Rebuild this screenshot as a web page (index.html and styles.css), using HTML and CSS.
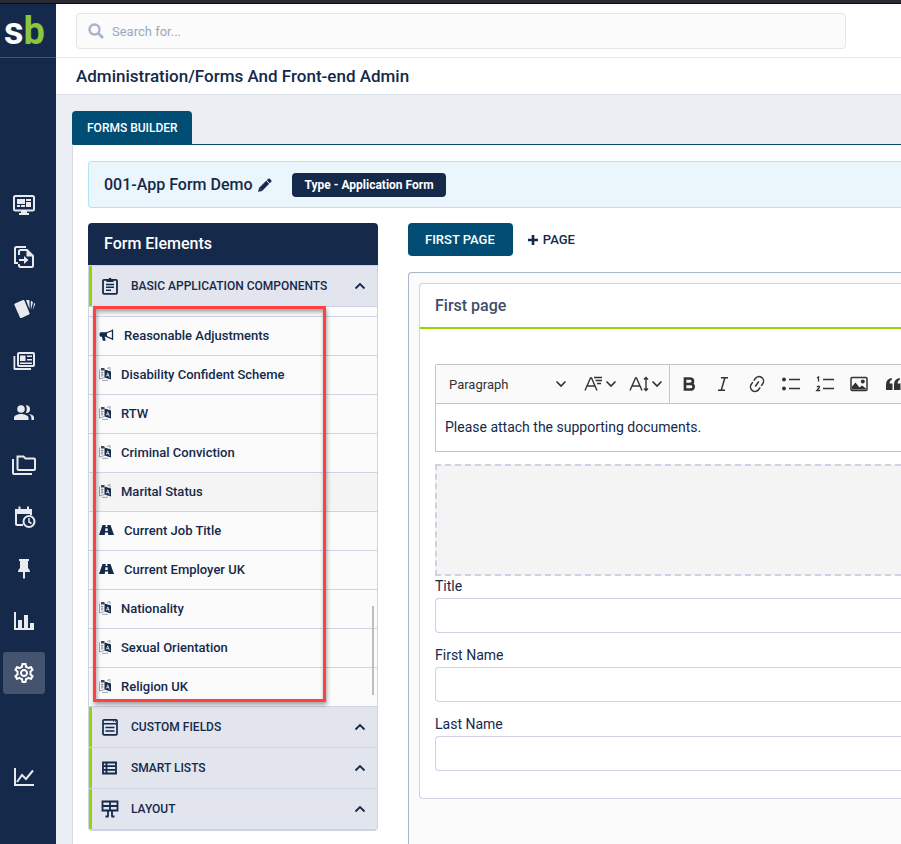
FILE: index.html
```
<!DOCTYPE html>
<html lang="en">
<head>
    <meta charset="UTF-8">
    <meta name="viewport" content="width=device-width, initial-scale=1.0">
    <title>Forms Builder</title>
    <link rel="stylesheet" href="styles.css">
</head>
<body>
    <!-- Shared icons -->
    <svg class="sprite" aria-hidden="true">
        <symbol id="chevron-up" viewBox="0 0 12 12"><path d="M1.500 8.500 6 4l4.500 4.500" fill="none" stroke="currentColor" stroke-width="1.800"/></symbol>
        <symbol id="chevron-down" viewBox="0 0 12 12"><path d="M2 4l4 4 4-4" fill="none" stroke="currentColor" stroke-width="1.700" stroke-linecap="round"/></symbol>
        <symbol id="translate" viewBox="0 0 12 14">
            <path d="M.5 2.500V12l5-1.500" fill="none" stroke="currentColor" stroke-width=".7" opacity=".6"/>
            <path d="M2 1h3.500v2.500H2z" fill="currentColor" opacity=".85"/>
            <path d="M8 1.500l3-1v3" fill="none" stroke="currentColor" stroke-width=".7" opacity=".6"/>
            <path d="M2 5.500h2.500M2 8h2.500M3 4.500V10" stroke="currentColor" stroke-width=".7" opacity=".6"/>
            <path d="M5.500 2.500 12 4.500v8L5.500 10.500z" fill="currentColor"/>
            <path d="M7.300 9.500 8.800 5.800l1.600 4.700M7.900 8.500h2" fill="none" stroke="#fff" stroke-width=".7"/>
            <path d="M3 13.300h6" fill="none" stroke="currentColor" stroke-width=".7" opacity=".6"/>
        </symbol>
        <symbol id="bullhorn" viewBox="0 0 14 14">
            <path d="M13 1.500v10.500M12.800 2.500 6.500 5M12.800 11 6.500 8.300" fill="none" stroke="currentColor" stroke-width="1.300"/>
            <path d="M1 4.200h6.500v4.600H5.200l1 4H3.400l-1-4H1q-1-.5-1-2.300t1-2.300z" fill="currentColor"/>
        </symbol>
        <symbol id="road" viewBox="0 0 15 12">
            <path d="M3.500 1H6.700L6.500 3h2l-.2-2h3.200L15 11H9.200L9 8.500H6L5.800 11H0zM6.400 4.300 6.200 7h2.600l-.2-2.700z" fill="currentColor" fill-rule="evenodd"/>
        </symbol>
    </svg>

    <div class="window-edge"></div>
    <div class="app">
        <nav class="sidebar">
            <a href="#" class="logo"><span>s</span><span class="logo-green">b</span></a>
            <div class="nav-items">
                <a href="#" class="nav-item" aria-label="Dashboard"><svg viewBox="0 0 24 24"><rect x="2" y="3" width="20" height="14.500" rx="1.500" fill="none" stroke="currentColor" stroke-width="2"/><path d="M9 18h6v2h2v2H7v-2h2zM5 6h8v5H5zM14 6h5v2h-5zM14 9h5v5h-5zM5 12h3v2H5zM9 12h4v2H9z" fill="currentColor"/></svg></a>
                <a href="#" class="nav-item" aria-label="Documents"><svg viewBox="0 0 24 24"><path d="M14 2H4.500Q3 2 3 3.500V18h3" fill="none" stroke="currentColor" stroke-width="2"/><path d="M7 10V6.500Q7 5 8.500 5H15l6 6v9.500q0 1.500-1.500 1.500H8.500Q7 22 7 20.500V19" fill="none" stroke="currentColor" stroke-width="2"/><path d="M14.500 5v6.500H21zM7 14h5v-3l4.500 4L12 19v-3H7z" fill="currentColor"/></svg></a>
                <a href="#" class="nav-item" aria-label="Cards"><svg viewBox="0 0 24 24"><path d="M3 6.500 11 3q1-.4 1.500.7L17.500 16q.4 1-.6 1.500L9.500 21q-1 .4-1.500-.6L2.400 8q-.4-1 .6-1.500z" fill="currentColor"/><path d="M14 3h2.500q1 0 1 1v8zM18.800 3.800l1.400.7q1 .5.600 1.500L18.800 13zM22 6l1.300.7-2.300 6.300" fill="currentColor"/></svg></a>
                <a href="#" class="nav-item" aria-label="News"><svg viewBox="0 0 24 24"><rect x="6" y="4" width="16" height="13" rx="1" fill="none" stroke="currentColor" stroke-width="2"/><path d="M1.500 7h1.800v12H19v2H3q-1.500 0-1.500-1.500zM8 6.500h5.500V12H8zM15 6.500h5V8h-5zM15 10h5v1.500h-5zM8 13.500h12V15H8z" fill="currentColor"/></svg></a>
                <a href="#" class="nav-item" aria-label="People"><svg viewBox="0 0 24 24"><path d="M16.500 13.100C19 14 19.500 15.500 19.500 19H22v-2.500c0-2-3-3.200-5.500-3.400zM14.500 12a3.700 3.700 0 1 0-.8-7.800c1.500 2 1.500 5.300 0 7.500z" fill="currentColor"/><circle cx="9" cy="8" r="3.800" fill="currentColor"/><path d="M9 13c-2.700 0-7 1.300-7 3.700V19h14.500v-2.300C16.500 14.300 11.700 13 9 13z" fill="currentColor"/></svg></a>
                <a href="#" class="nav-item" aria-label="Folders"><svg viewBox="0 0 24 24"><path d="M5.500 3.500h6l2 2H22q1 0 1 1V16q0 1-1 1H6.500q-1 0-1-1zM1 6v14q0 1 1 1h18" fill="none" stroke="currentColor" stroke-width="2"/></svg></a>
                <a href="#" class="nav-item" aria-label="Schedule"><svg viewBox="0 0 24 24"><path d="M11 20H5q-1 0-1-1V5h15v5M7.500 1.500V5M16 1.500V5" fill="none" stroke="currentColor" stroke-width="2"/><path d="M4 5h15v4H4z" fill="currentColor"/><circle cx="17" cy="16.500" r="5.500" fill="none" stroke="currentColor" stroke-width="2"/><path d="M17 13v4l2.500 1.500" fill="none" stroke="currentColor" stroke-width="1.500"/></svg></a>
                <a href="#" class="nav-item" aria-label="Pinned"><svg viewBox="0 0 24 24"><path d="M7 2h10v2h-1v7q2 1.500 2 4h-5v6l-1 1-1-1v-6H6q0-2.500 2-4V4H7z" fill="currentColor"/></svg></a>
                <a href="#" class="nav-item" aria-label="Reports"><svg viewBox="0 0 24 24"><path d="M2 3h2v16h2v-8h4v8h2V6h4v13h2v-5h4v7H2z" fill="currentColor"/></svg></a>
                <a href="#" class="nav-item active" aria-label="Settings"><svg viewBox="0 0 24 24"><path fill="currentColor" d="M19.43 12.98c.04-.32.07-.64.07-.98s-.03-.66-.07-.98l2.11-1.65c.19-.15.24-.42.12-.64l-2-3.46c-.09-.16-.26-.25-.44-.25-.06 0-.12.01-.17.03l-2.49 1c-.52-.4-1.08-.73-1.69-.98l-.38-2.65C14.46 2.18 14.25 2 14 2h-4c-.25 0-.46.18-.49.42l-.38 2.65c-.61.25-1.17.59-1.69.98l-2.49-1c-.06-.02-.12-.03-.18-.03-.17 0-.34.09-.43.25l-2 3.46c-.13.22-.07.49.12.64l2.11 1.65c-.04.32-.07.65-.07.98s.03.66.07.98l-2.11 1.65c-.19.15-.24.42-.12.64l2 3.46c.09.16.26.25.44.25.06 0 .12-.01.17-.03l2.49-1c.52.4 1.08.73 1.69.98l.38 2.65c.03.24.24.42.49.42h4c.25 0 .46-.18.49-.42l.38-2.65c.61-.25 1.17-.59 1.69-.98l2.49 1c.06.02.12.03.18.03.17 0 .34-.09.43-.25l2-3.46c.12-.22.07-.49-.12-.64l-2.11-1.65zm-1.98-1.71c.04.31.05.52.05.73 0 .21-.02.43-.05.73l-.14 1.13.89.7 1.08.84-.7 1.21-1.27-.51-1.04-.42-.9.68c-.43.32-.84.56-1.25.73l-1.06.43-.16 1.13-.2 1.35h-1.4l-.19-1.35-.16-1.13-1.06-.43c-.43-.18-.83-.41-1.23-.71l-.91-.7-1.06.43-1.27.51-.7-1.21 1.08-.84.89-.7-.14-1.13c-.03-.31-.05-.54-.05-.74s.02-.43.05-.73l.14-1.13-.89-.7-1.08-.84.7-1.21 1.27.51 1.04.42.9-.68c.43-.32.84-.56 1.25-.73l1.06-.43.16-1.13.2-1.35h1.39l.19 1.35.16 1.13 1.06.43c.43.18.83.41 1.23.71l.91.7 1.06-.43 1.27-.51.7 1.21-1.07.85-.89.7.14 1.13zM12 8c-2.210 0-4 1.790-4 4s1.790 4 4 4 4-1.790 4-4-1.790-4-4-4zm0 6c-1.100 0-2-.9-2-2s.9-2 2-2 2 .9 2 2-.9 2-2 2z"/></svg></a>
                <a href="#" class="nav-item nav-last" aria-label="Analytics"><svg viewBox="0 0 24 24"><path d="M3 3v17h19M5 17l5-7 4 4 7-8.500" fill="none" stroke="currentColor" stroke-width="2"/></svg></a>
            </div>
        </nav>

        <main class="main">
            <header class="topbar">
                <label class="search">
                    <svg viewBox="0 0 16 16"><circle cx="6.500" cy="6.500" r="5" fill="none" stroke="currentColor" stroke-width="2.400"/><path d="M10.500 10.500 15 15" stroke="currentColor" stroke-width="2.800"/></svg>
                    <input type="text" placeholder="Search for..." aria-label="Search">
                </label>
            </header>
            <h1 class="page-title">Administration/Forms And Front-end Admin</h1>

            <div class="content">
                <button class="tab">FORMS BUILDER</button>
                <div class="builder">
                    <div class="form-info">
                        <h2>001-App Form Demo</h2>
                        <button class="edit" aria-label="Edit name"><svg viewBox="0 0 14 14"><path d="M10.300 1q.7-.7 1.400 0L13 2.300q.7.7 0 1.400l-1.300 1.300L9 2.300zM8.200 3.100 10.900 5.800 4 12.700.5 13.500 1.300 10zM2.300 10.700l-.4 1.400 1.400-.4z" fill="currentColor" stroke="currentColor" stroke-width=".5" fill-rule="evenodd"/></svg></button>
                        <span class="type-badge">Type - Application Form</span>
                    </div>

                    <div class="columns">
                        <!-- Form elements -->
                        <aside class="elements">
                            <h3>Form Elements</h3>
                            <button class="group">
                                <svg class="group-icon" viewBox="0 0 18 18"><rect x="2" y="2.800" width="14" height="14" rx="1" fill="none" stroke="currentColor" stroke-width="1.800"/><path d="M5.500 2h2Q9-.5 10.500 2h2v3h-7z" fill="currentColor"/><path d="M5 7.500h8M5 10.300h8M5 13.200h5" stroke="currentColor" stroke-width="1.500"/></svg>
                                <span>BASIC APPLICATION COMPONENTS</span>
                                <svg class="chevron"><use href="#chevron-up"/></svg>
                            </button>
                            <div class="list-wrap">
                                <ul class="element-list">
                                    <li class="cut"></li>
                                    <li><svg class="wide"><use href="#bullhorn"/></svg>Reasonable Adjustments</li>
                                    <li><svg><use href="#translate"/></svg>Disability Confident Scheme</li>
                                    <li><svg><use href="#translate"/></svg>RTW</li>
                                    <li><svg><use href="#translate"/></svg>Criminal Conviction</li>
                                    <li class="hovered"><svg><use href="#translate"/></svg>Marital Status</li>
                                    <li><svg class="wide"><use href="#road"/></svg>Current Job Title</li>
                                    <li><svg class="wide"><use href="#road"/></svg>Current Employer UK</li>
                                    <li><svg><use href="#translate"/></svg>Nationality</li>
                                    <li><svg><use href="#translate"/></svg>Sexual Orientation</li>
                                    <li><svg><use href="#translate"/></svg>Religion UK</li>
                                </ul>
                                <div class="scroll-thumb"></div>
                                <div class="highlight"></div>
                            </div>
                            <button class="group">
                                <svg class="group-icon" viewBox="0 0 18 18"><rect x="2" y="1.800" width="14" height="15" rx="1" fill="none" stroke="currentColor" stroke-width="1.700"/><path d="M2 5.800h14M4.500 9.500h9M4.500 13h9" stroke="currentColor" stroke-width="1.600"/><path d="M12 3.200h1M14 3.200h1" stroke="currentColor"/></svg>
                                <span>CUSTOM FIELDS</span>
                                <svg class="chevron"><use href="#chevron-up"/></svg>
                            </button>
                            <button class="group">
                                <svg class="group-icon" viewBox="0 0 18 18"><path d="M2 3.500h13v11H2zM2 7.200h13M2 10.800h13M5.500 3.500v11" fill="none" stroke="currentColor" stroke-width="1.800"/></svg>
                                <span>SMART LISTS</span>
                                <svg class="chevron"><use href="#chevron-up"/></svg>
                            </button>
                            <button class="group">
                                <svg class="group-icon" viewBox="0 0 18 18"><path d="M1.500 1.500h15v9h-15zM1.500 6h15M9 1.500v9M7 10.500v6M11 10.500v6M4.500 16.500h3M10.500 16.500h3" fill="none" stroke="currentColor" stroke-width="1.800"/></svg>
                                <span>LAYOUT</span>
                                <svg class="chevron"><use href="#chevron-up"/></svg>
                            </button>
                        </aside>

                        <!-- Page editor -->
                        <section class="editor">
                            <div class="page-tabs">
                                <button class="page-tab">FIRST PAGE</button>
                                <button class="add-page"><svg viewBox="0 0 10 10"><path d="M5 0v10M0 5h10" stroke="currentColor" stroke-width="2.600"/></svg>PAGE</button>
                            </div>
                            <div class="canvas">
                                <div class="page-card">
                                    <h3>First page</h3>
                                    <div class="page-body">
                                        <div class="rich-text">
                                            <div class="toolbar">
                                                <div class="tool-group">
                                                    <button class="tool-heading">Paragraph <svg class="caret"><use href="#chevron-down"/></svg></button>
                                                    <button class="tool-drop" aria-label="Font family"><svg viewBox="0 0 20 20"><path d="M2 16.500 7.500 4h1L14 16.500M4 12h8M11 3.500h8M12.500 6.500h6.500M14 9.500h4" fill="none" stroke="currentColor" stroke-width="1.400"/></svg><svg class="caret"><use href="#chevron-down"/></svg></button>
                                                    <button class="tool-drop" aria-label="Font size"><svg viewBox="0 0 20 20"><path d="M1 16.500 6.500 4h1L13 16.500M3 12h8M17 4v12M15 5.500 17 3.500 19 5.500M15 14.500 17 16.500 19 14.500" fill="none" stroke="currentColor" stroke-width="1.400"/></svg><svg class="caret"><use href="#chevron-down"/></svg></button>
                                                </div>
                                                <div class="tool-group">
                                                    <button class="tool" aria-label="Bold"><svg viewBox="0 0 20 20"><path d="M6 4.500h4.500q3.500 0 3.500 2.700T10.500 10H6zM6 10h5q3.700 0 3.700 2.800t-3.700 2.700H6z" fill="none" stroke="currentColor" stroke-width="2.700"/></svg></button>
                                                    <button class="tool" aria-label="Italic"><svg viewBox="0 0 20 20"><path d="M8 3.700h7M5 16.300h7M11.800 4 8.300 16" fill="none" stroke="currentColor" stroke-width="1.500"/></svg></button>
                                                    <button class="tool" aria-label="Link"><svg viewBox="0 0 20 20"><g transform="rotate(-55 10 10)" fill="none" stroke="currentColor" stroke-width="1.500" stroke-linecap="round"><path d="M8.500 5.500H6.500a4.500 4.500 0 0 0 0 9h2M11.500 5.500h2a4.500 4.500 0 0 1 0 9h-2M7.500 10h5"/></g></svg></button>
                                                    <button class="tool" aria-label="Bulleted list"><svg viewBox="0 0 20 20"><circle cx="3" cy="5.500" r="1.900" fill="currentColor"/><circle cx="3" cy="14.500" r="1.900" fill="currentColor"/><path d="M8 5.500h11M8 14.500h11" stroke="currentColor" stroke-width="1.500"/></svg></button>
                                                    <button class="tool" aria-label="Numbered list"><svg viewBox="0 0 20 20"><path d="M2 4l1.500-1v4.500M1.800 13q2.700-1.700 2.700.2L1.800 16.500h3.400" fill="none" stroke="currentColor" stroke-width="1.300"/><path d="M8 5.500h11M8 14.500h11" stroke="currentColor" stroke-width="1.500"/></svg></button>
                                                    <button class="tool" aria-label="Image"><svg viewBox="0 0 20 20"><rect x="2" y="3.500" width="16" height="13" rx="1" fill="none" stroke="currentColor" stroke-width="1.500"/><path d="M3 15.500v-3l3.500-4 4 5 2.500-2 4 3v1z" fill="currentColor"/><circle cx="13.800" cy="7.500" r="2" fill="currentColor"/></svg></button>
                                                    <button class="tool" aria-label="Block quote"><svg viewBox="0 0 20 20"><path d="M3 10.500q0-5.500 5.500-6.500L9 5.500Q6.500 6.500 6.500 9.500H9.500V16H3zM11 10.500q0-5.500 5.500-6.500L17 5.500q-2.500 1-2.500 4h3V16H11z" fill="currentColor"/></svg></button>
                                                </div>
                                            </div>
                                            <p>Please attach the supporting documents.</p>
                                        </div>
                                        <div class="drop-zone"></div>
                                        <div class="field">
                                            <label for="title">Title</label>
                                            <input type="text" id="title">
                                        </div>
                                        <div class="field">
                                            <label for="first-name">First Name</label>
                                            <input type="text" id="first-name">
                                        </div>
                                        <div class="field">
                                            <label for="last-name">Last Name</label>
                                            <input type="text" id="last-name">
                                        </div>
                                    </div>
                                </div>
                            </div>
                        </section>
                    </div>
                </div>
            </div>
        </main>
    </div>
</body>
</html>
```
FILE: styles.css
```
* {
    box-sizing: border-box;
}
body {
    margin: 0;
    height: 100vh;
    display: flex;
    flex-direction: column;
    overflow: hidden;
    font-family: Roboto, "Liberation Sans", sans-serif;
    font-size: 14px;
    color: #15294b;
    background: #ebeef3;
}
h1, h2, h3, p, ul {
    margin: 0;
    padding: 0;
    font-weight: 500;
}
button {
    border: 0;
    padding: 0;
    background: none;
    color: inherit;
    font-family: inherit;
    font-weight: 500;
    cursor: pointer;
}
svg {
    flex: none;
}
.sprite {
    display: none;
}
.window-edge {
    flex: none;
    height: 4px;
    background: #2b2a33;
    border-bottom: 1px solid #0c0c0d;
}
.app {
    flex: 1;
    min-height: 0;
    display: flex;
}

/* Sidebar */
.sidebar {
    flex: none;
    width: 56px;
    background: #15294b;
}
.logo {
    display: flex;
    height: 54px;
    padding-left: 4px;
    border-bottom: 1px solid #44546f;
    font-size: 38px;
    line-height: 54px;
    font-weight: 700;
    color: #fff;
    text-decoration: none;
}
.logo-green {
    color: #8cc63f;
}
.nav-items {
    display: flex;
    flex-direction: column;
    gap: 10px;
    padding: 126px 3px 0;
}
.nav-item {
    display: flex;
    align-items: center;
    justify-content: center;
    width: 42px;
    height: 42px;
    border-radius: 3px;
    color: #e8eaee;
}
.nav-item svg {
    width: 24px;
    height: 24px;
}
.nav-item.active {
    background: #44546f;
    color: #fff;
}
.nav-last {
    margin-top: 52px;
}

/* Header */
.main {
    flex: 1;
    min-width: 0;
    display: flex;
    flex-direction: column;
}
.topbar {
    flex: none;
    height: 54px;
    padding: 9px 55px 0 20px;
    background: #fff;
    border-bottom: 1px solid #e3e6ed;
}
.search {
    display: flex;
    align-items: center;
    gap: 8px;
    height: 36px;
    padding: 0 11px;
    border: 1px solid #e2e5ec;
    border-radius: 4px;
    background: #fbfbfb;
    color: #a9b5c9;
}
.search svg {
    width: 16px;
    height: 16px;
}
.search input {
    flex: 1;
    border: 0;
    padding: 0;
    outline: 0;
    background: none;
    font-family: inherit;
    font-size: 13px;
}
.search input::placeholder {
    color: #9aa8bf;
}
.page-title {
    flex: none;
    padding-left: 20px;
    font-size: 17px;
    line-height: 36px;
    background: #fff;
    border-bottom: 1px solid #dde2ea;
}

/* Builder */
.content {
    flex: 1;
    min-height: 0;
    padding: 16px 0 0 16px;
    display: flex;
    flex-direction: column;
    align-items: flex-start;
}
.tab {
    flex: none;
    height: 33px;
    padding: 0 14px 0 15px;
    border-radius: 4px 4px 0 0;
    background: #014d73;
    color: #fff;
    font-size: 12px;
}
.builder {
    flex: 1;
    min-height: 0;
    align-self: stretch;
    display: flex;
    flex-direction: column;
    padding: 16px 0 0 15px;
    border-top: 1px solid #014d73;
    border-left: 1px solid #d5dae5;
    background: #fff;
}
.form-info {
    flex: none;
    display: flex;
    align-items: center;
    height: 47px;
    padding-left: 15px;
    border: 1px solid #b2e4f2;
    border-right: 0;
    border-radius: 4px 0 0 4px;
    background: #ebf6fc;
}
.form-info h2 {
    font-size: 16px;
}
.edit {
    display: flex;
    margin: 0 20px 0 6px;
}
.edit svg {
    width: 14px;
    height: 14px;
}
.type-badge {
    padding: 0 12px;
    border-radius: 4px;
    background: #15294b;
    color: #fff;
    font-size: 12px;
    font-weight: 700;
    line-height: 24px;
}
.columns {
    flex: 1;
    min-height: 0;
    display: flex;
    gap: 30px;
    margin-top: 15px;
}

/* Form elements */
.elements {
    flex: none;
    align-self: flex-start;
    width: 290px;
    border-bottom: 1px solid #cdd3e2;
    border-radius: 4px;
    overflow: hidden;
}
.elements h3 {
    padding-left: 16px;
    font-size: 16px;
    line-height: 42px;
    background: #15294b;
    color: #fff;
    border-bottom: 1px solid #cdd3e2;
}
.group {
    display: flex;
    align-items: center;
    width: 100%;
    height: 41px;
    padding: 0 11px 0 12px;
    border: 1px solid #cdd3e2;
    border-top: 0;
    box-shadow: inset 3px 0 #95d600;
    background: #e2e5ed;
    font-size: 12px;
}
.group-icon {
    width: 18px;
    height: 18px;
    margin-right: 12px;
}
.chevron {
    width: 12px;
    height: 12px;
    margin-left: auto;
}
.list-wrap {
    position: relative;
}
.element-list {
    list-style: none;
    border: 1px solid #cdd3e2;
    border-width: 0 1px;
    background: #fbfbfb;
}
.element-list li {
    display: flex;
    align-items: center;
    gap: 10px;
    height: 39px;
    padding: 0 0 2px 10px;
    border-bottom: 1px solid #cdd3e2;
    font-size: 13px;
}
.element-list .cut {
    height: 10px;
}
.element-list .hovered {
    background: #f4f4f4;
}
.element-list svg {
    width: 12px;
    height: 14px;
}
.element-list .wide {
    width: 15px;
}
.scroll-thumb {
    position: absolute;
    right: 4px;
    bottom: 12px;
    width: 2px;
    height: 89px;
    background: #bfbfbf;
}
.highlight {
    position: absolute;
    top: -1px;
    bottom: 5px;
    left: 5px;
    right: 52px;
    border: 3px solid #fe4141;
    box-shadow: 1px 3px 4px rgba(0, 0, 0, .35), inset 1px 3px 4px rgba(0, 0, 0, .35);
}

/* Page editor */
.editor {
    flex: 1;
    min-width: 0;
    display: flex;
    flex-direction: column;
}
.page-tabs {
    flex: none;
    display: flex;
    gap: 15px;
    height: 33px;
}
.page-tab {
    padding: 0 18px 0 17px;
    border-radius: 4px;
    background: #014d73;
    color: #fff;
    font-size: 13px;
}
.add-page {
    display: flex;
    align-items: center;
    gap: 5px;
    font-size: 13px;
}
.add-page svg {
    width: 10px;
    height: 10px;
}
.canvas {
    flex: 1;
    min-height: 0;
    overflow: hidden;
    margin-top: 16px;
    padding: 10px 0 0 10px;
    border: 1px solid #aab5cd;
    border-width: 1px 0 0 1px;
    border-radius: 4px 0 0 0;
    background: #fbfbfb;
}
.page-card {
    border: 1px solid #cdd3e2;
    border-right: 0;
    border-radius: 4px 0 0 4px;
    background: #fff;
}
.page-card h3 {
    padding-left: 15px;
    font-size: 16px;
    line-height: 43px;
    color: #3f4d6b;
    border-bottom: 2px solid #95d600;
}
.page-body {
    padding: 35px 0 27px 15px;
}
.rich-text {
    border: 1px solid #c4c4c4;
    border-right: 0;
    border-radius: 2px 0 0 0;
}
.toolbar {
    display: flex;
    height: 39px;
    overflow: hidden;
    background: #fafafa;
    border-bottom: 1px solid #c4c4c4;
    color: #333;
}
.tool-group {
    flex: none;
    display: flex;
}
.tool-group + .tool-group {
    border-left: 1px solid #c4c4c4;
    padding-left: 2px;
}
.toolbar svg {
    width: 20px;
    height: 20px;
}
.toolbar .caret {
    width: 12px;
    height: 12px;
}
.tool-heading {
    display: flex;
    align-items: center;
    justify-content: space-between;
    width: 131px;
    margin-right: 10px;
    padding-left: 13px;
    font-size: 13px;
    font-weight: 400;
}
.tool-drop {
    display: flex;
    align-items: center;
    gap: 2px;
    padding: 0 6px;
}
.tool {
    display: flex;
    align-items: center;
    justify-content: center;
    width: 34px;
}
.rich-text p {
    padding-left: 9px;
    font-size: 14px;
    font-weight: 400;
    line-height: 47px;
}
.drop-zone {
    height: 112px;
    margin-top: 12px;
    border: 2px dashed #cdd3e2;
    border-right: 0;
    background: #f4f4f4;
}
.field {
    display: flex;
    flex-direction: column;
    gap: 2px;
}
.field + .field {
    margin-top: 12px;
}
.field label {
    font-size: 14px;
    line-height: 20px;
}
.field input {
    height: 35px;
    border: 1px solid #cdd3e2;
    border-right: 0;
    border-radius: 4px 0 0 4px;
    padding: 0 10px;
    font-family: inherit;
    font-size: 14px;
}
```
